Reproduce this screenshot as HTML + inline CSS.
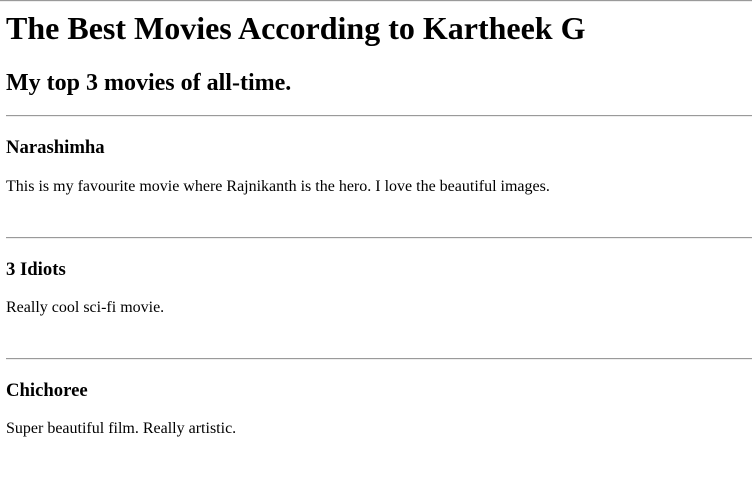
<!DOCTYPE html>
<html><head><style>
body{margin:0;width:752px;height:481px;position:relative;font-family:"Liberation Serif",serif;color:#000;background:#fff;overflow:hidden}
div{position:absolute;left:6px;white-space:nowrap;line-height:1}
.hr{left:6px;right:0;height:0;border-top:1px solid #9a9a9a;border-bottom:1px solid #eee}
</style></head><body>
<div class="hr" style="left:0;top:0"></div>
<div style="top:12px;font-size:32px;font-weight:bold">The Best Movies According to Kartheek G</div>
<div style="top:71px;font-size:24px;font-weight:bold">My top 3 movies of all-time.</div>
<div class="hr" style="top:115px"></div>
<div style="top:139px;font-size:18.7px;font-weight:bold">Narashimha</div>
<div style="top:179px;font-size:16px">This is my favourite movie where Rajnikanth is the hero. I love the beautiful images.</div>
<div class="hr" style="top:237px"></div>
<div style="top:261px;font-size:18.7px;font-weight:bold">3 Idiots</div>
<div style="top:300px;font-size:16px">Really cool sci-fi movie.</div>
<div class="hr" style="top:358px"></div>
<div style="top:382px;font-size:18.7px;font-weight:bold">Chichoree</div>
<div style="top:421px;font-size:16px">Super beautiful film. Really artistic.</div>
</body></html>
